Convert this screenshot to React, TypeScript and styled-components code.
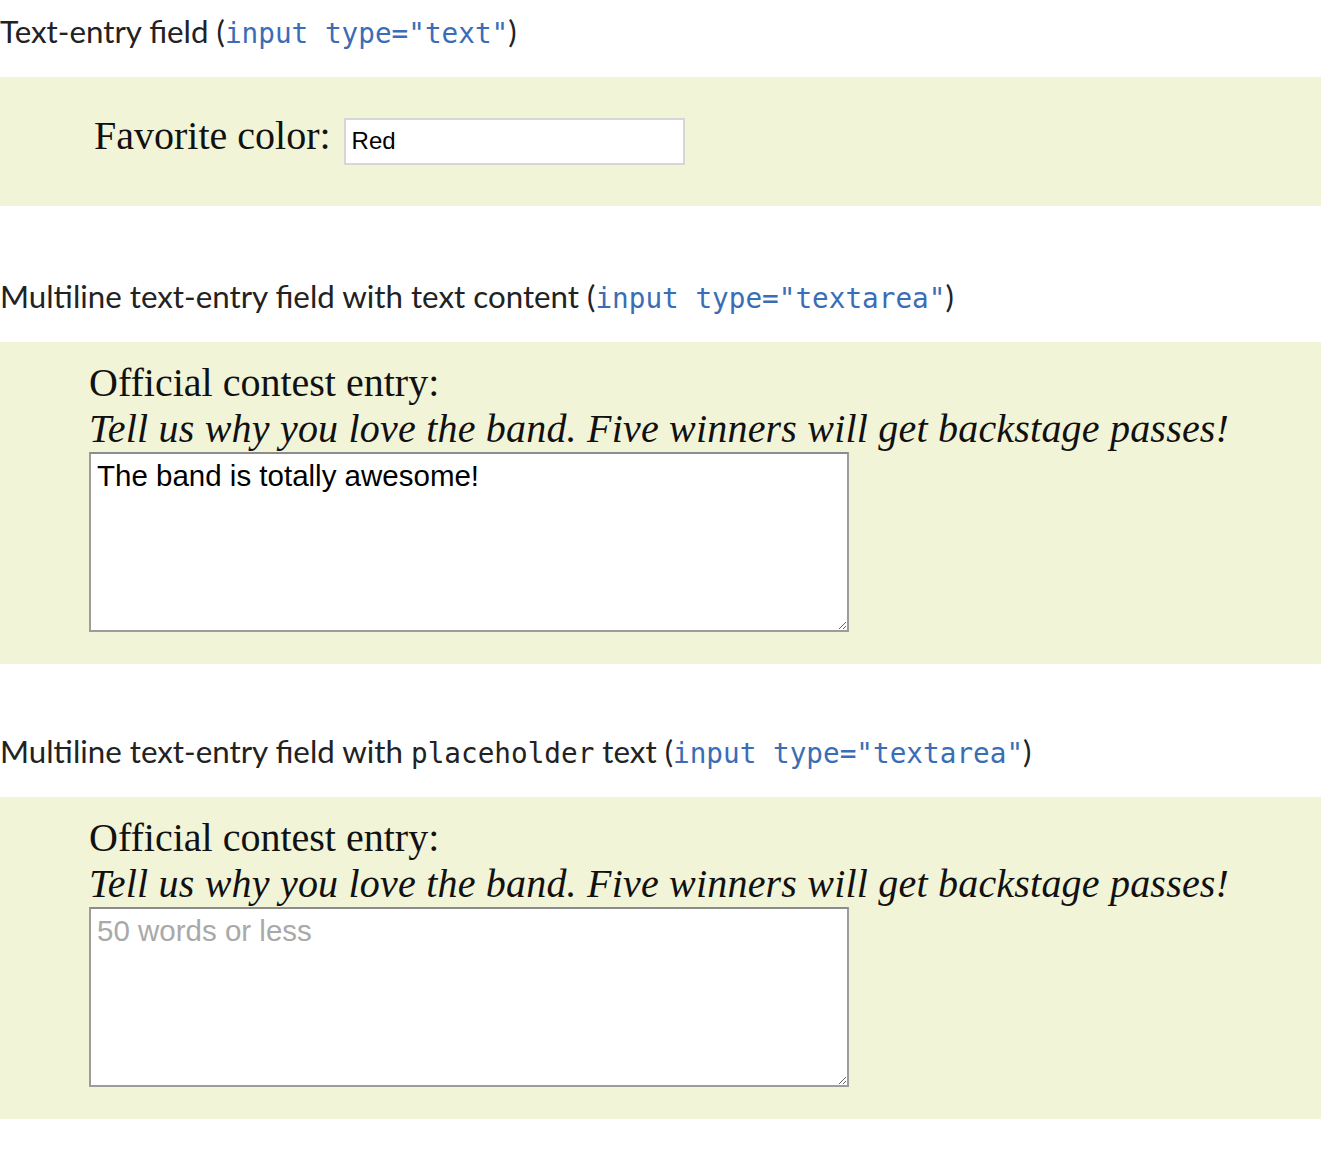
import React from 'react';
import styled, { createGlobalStyle } from 'styled-components';

const GlobalStyle = createGlobalStyle`
  html, body { margin: 0; padding: 0; background: #fff; }
  body { font-family: Lato, "Liberation Sans", sans-serif; color: #222; }
`;

const Page = styled.div`
  display: flex;
  flex-direction: column;
  padding-bottom: 48px;
`;

const Section = styled.section<{ $gap?: number }>`
  margin-top: ${p => p.$gap ?? 0}px;
`;

const Caption = styled.p<{ $first?: boolean }>`
  margin: 0;
  padding: ${p => (p.$first ? '11px' : '0')} 0 26px 0;
  font-family: Lato, "Liberation Sans", sans-serif;
  font-size: 31.3px;
  line-height: 40px;
  color: #222;
  white-space: pre;
`;

const Code = styled.code<{ $plain?: boolean }>`
  font-family: "DejaVu Sans Mono", "Liberation Mono", monospace;
  font-size: 27.7px;
  line-height: 1;
  color: ${p => (p.$plain ? '#222' : '#3b6db6')};
  white-space: pre;
`;

const Panel = styled.div<{ $indent: number; $pad: string }>`
  background: #f1f4d7;
  padding: ${p => p.$pad};
  padding-left: ${p => p.$indent}px;
`;

const FieldRow = styled.label`
  display: flex;
  align-items: baseline;
  gap: 13px;
  font-family: "Liberation Serif", "Times New Roman", serif;
  font-size: 40px;
  color: #111;
`;

const TextInput = styled.input`
  box-sizing: border-box;
  width: 341px;
  height: 47px;
  padding: 0 6px;
  border: 2px solid #d6d6d6;
  background: #fff;
  font-family: "Liberation Sans", Arial, sans-serif;
  font-size: 24px;
  color: #000;
  outline: none;
`;

const Heading = styled.div`
  font-family: "Liberation Serif", "Times New Roman", serif;
  font-size: 40px;
  line-height: 46px;
  color: #111;
`;

const Prompt = styled(Heading)`
  font-style: italic;
  letter-spacing: 0.2px;
`;

const TextArea = styled.textarea`
  display: block;
  box-sizing: border-box;
  width: 760px;
  height: 180px;
  margin: 0;
  padding: 4px 6px;
  border: 2px solid #9c9c9c;
  border-top-color: #8c8c8c;
  background: #fff;
  font-family: "Liberation Sans", Arial, sans-serif;
  font-size: 29.5px;
  line-height: 35px;
  color: #000;
  outline: none;
  &::placeholder { color: #a9a9a9; }
`;

const ContestEntry = ({ value, placeholder }: { value?: string; placeholder?: string }) => (
  <Panel $indent={89} $pad="18px 0 32px">
    <Heading>Official contest entry:</Heading>
    <Prompt>Tell us why you love the band. Five winners will get backstage passes!</Prompt>
    <TextArea defaultValue={value} placeholder={placeholder} />
  </Panel>
);

export default function App() {
  return (
    <Page>
      <GlobalStyle />
      <Section>
        <Caption $first>
          Text-entry field (<Code>input type="text"</Code>)
        </Caption>
        <Panel $indent={94} $pad="35px 0 41px">
          <FieldRow>
            Favorite color:
            <TextInput type="text" defaultValue="Red" />
          </FieldRow>
        </Panel>
      </Section>

      <Section $gap={70}>
        <Caption>
          Multiline text-entry field with text content (<Code>input type="textarea"</Code>)
        </Caption>
        <ContestEntry value="The band is totally awesome!" />
      </Section>

      <Section $gap={67}>
        <Caption>
          Multiline text-entry field with <Code $plain>placeholder</Code> text (<Code>input type="textarea"</Code>)
        </Caption>
        <ContestEntry placeholder="50 words or less" />
      </Section>
    </Page>
  );
}
